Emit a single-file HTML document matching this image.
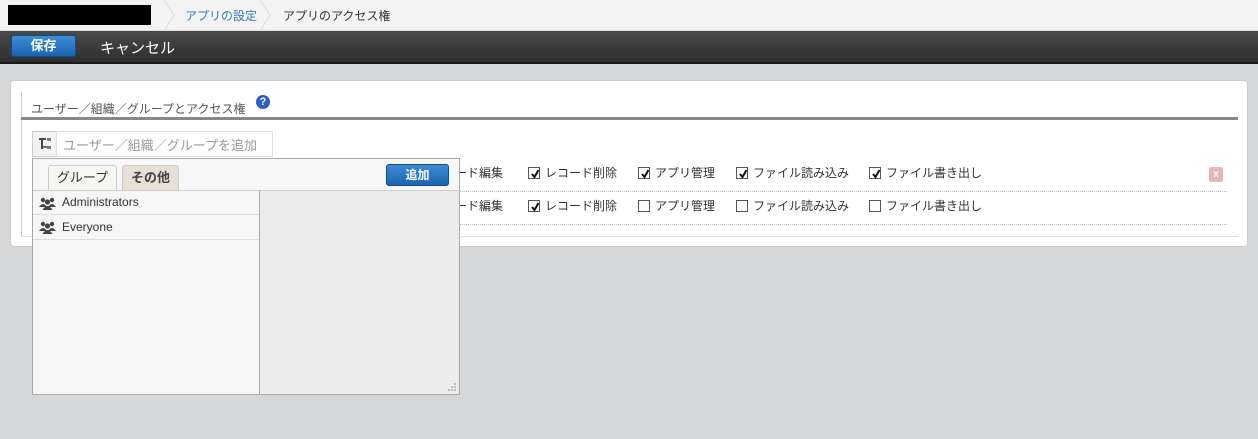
<!DOCTYPE html>
<html><head><meta charset="utf-8"><style>
*{box-sizing:border-box;margin:0;padding:0}
body{width:1258px;height:439px;overflow:hidden;background:#d5d7d9;font-family:"Liberation Sans","Noto Sans CJK JP",sans-serif;position:relative;color:#333}
.a{position:absolute}
.cb{position:absolute;width:12px;height:12px;border:1px solid #555;background:#fff}
.cb svg{position:absolute;left:1px;top:1px}
.t{position:absolute;font-size:12px;color:#333;white-space:nowrap}
</style></head><body>
<div class="a" style="left:0;top:0;width:1258px;height:31px;background:#f3f3f3;border-bottom:1px solid #ddd"></div>
<div class="a" style="left:8px;top:5px;width:143px;height:20px;background:#000"></div>
<svg class="a" style="left:160px;top:0" width="120" height="31"><path d="M4 0 L14 15 L4 31" fill="none" stroke="#ddd"/><path d="M100 0 L110 15 L100 31" fill="none" stroke="#ddd"/></svg>
<div class="t" style="left:185px;top:7px;font-size:12px;color:#3b79b8">アプリの設定</div>
<div class="t" style="left:283px;top:7px;font-size:12px">アプリのアクセス権</div>
<div class="a" style="left:0;top:31px;width:1258px;height:33px;background:linear-gradient(#4a4a4a,#2e2e2e);border-bottom:2px solid #1a1a1a"></div>
<div class="a" style="left:11px;top:35px;width:65px;height:22px;background:linear-gradient(#3d8ed8,#1b63b0);border:1px solid #0f4c8a;border-radius:3px;color:#fff;font-weight:bold;font-size:13px;text-align:center;line-height:20px">保存</div>
<div class="t" style="left:100px;top:37px;color:#fff;font-size:15px">キャンセル</div>
<div class="a" style="left:10px;top:80px;width:1238px;height:167px;background:#fff;border:1px solid #ccc;border-radius:4px"></div>
<div class="a" style="left:21px;top:92px;width:1px;height:144px;background:#ccc"></div>
<div class="a" style="left:21px;top:236px;width:1217px;height:1px;background:#e6dcd4"></div>
<div class="t" style="left:31px;top:100px;font-size:12px;color:#555">ユーザー／組織／グループとアクセス権</div>
<div class="a" style="left:256px;top:95px;width:14px;height:14px;border-radius:50%;background:#2c5fc2;color:#fff;font-size:11px;font-weight:bold;text-align:center;line-height:14px">?</div>
<div class="a" style="left:21px;top:117px;width:1217px;height:3px;background:#888"></div>
<div class="a" style="left:32px;top:131px;width:25px;height:26px;border:1px solid #ccc;background:#f2f2f2"></div>
<svg class="a" style="left:38px;top:137px" width="14" height="14"><path d="M1 2H8M4 2V12" stroke="#444" stroke-width="2" fill="none"/><rect x="9" y="1" width="4" height="3" fill="#777"/><rect x="9" y="9" width="4" height="3" fill="#777"/><path d="M4 10H9" stroke="#444" stroke-width="1.5"/></svg>
<div class="a" style="left:56px;top:131px;width:217px;height:26px;border:1px solid #ddd;background:#fff"></div>
<div class="t" style="left:63px;top:135px;font-size:13px;color:#999">ユーザー／組織／グループを追加</div>
<div class="t" style="left:455px;top:164px">ード編集</div>
<div class="cb" style="left:528px;top:167px"><svg width="10" height="10"><path d="M2 5L4.5 8L8.5 1" stroke="#111" stroke-width="2" fill="none"/></svg></div><div class="t" style="left:545px;top:164px">レコード削除</div>
<div class="cb" style="left:638px;top:167px"><svg width="10" height="10"><path d="M2 5L4.5 8L8.5 1" stroke="#111" stroke-width="2" fill="none"/></svg></div><div class="t" style="left:655px;top:164px">アプリ管理</div>
<div class="cb" style="left:736px;top:167px"><svg width="10" height="10"><path d="M2 5L4.5 8L8.5 1" stroke="#111" stroke-width="2" fill="none"/></svg></div><div class="t" style="left:753px;top:164px">ファイル読み込み</div>
<div class="cb" style="left:869px;top:167px"><svg width="10" height="10"><path d="M2 5L4.5 8L8.5 1" stroke="#111" stroke-width="2" fill="none"/></svg></div><div class="t" style="left:886px;top:164px">ファイル書き出し</div>
<div class="a" style="left:1209px;top:167px;width:14px;height:15px;background:#e8b4b8;border-radius:2px;color:#fff;font-size:10px;font-weight:bold;text-align:center;line-height:15px">x</div>
<div class="a" style="left:455px;top:191px;width:772px;border-top:1px dotted #bbb"></div>
<div class="t" style="left:455px;top:197px">ード編集</div>
<div class="cb" style="left:528px;top:200px"><svg width="10" height="10"><path d="M2 5L4.5 8L8.5 1" stroke="#111" stroke-width="2" fill="none"/></svg></div><div class="t" style="left:545px;top:197px">レコード削除</div>
<div class="cb" style="left:638px;top:200px"></div><div class="t" style="left:655px;top:197px">アプリ管理</div>
<div class="cb" style="left:736px;top:200px"></div><div class="t" style="left:753px;top:197px">ファイル読み込み</div>
<div class="cb" style="left:869px;top:200px"></div><div class="t" style="left:886px;top:197px">ファイル書き出し</div>
<div class="a" style="left:455px;top:224px;width:772px;border-top:1px dotted #bbb"></div>
<div class="a" style="left:32px;top:158px;width:428px;height:237px;background:#f7f7f7;border:1px solid #aaa"></div>
<div class="a" style="left:48px;top:165px;width:69px;height:26px;background:#f7f7f2;border:1px solid #ccc;border-bottom:none;border-radius:3px 3px 0 0;font-size:13px;text-align:center;line-height:24px">グループ</div>
<div class="a" style="left:122px;top:165px;width:57px;height:25px;background:#e8e0d6;border:1px solid #ccc;border-bottom:none;border-radius:3px 3px 0 0;font-size:13px;text-align:center;line-height:24px;font-weight:bold;color:#444">その他</div>
<div class="a" style="left:386px;top:164px;width:63px;height:22px;background:linear-gradient(#3a8cd6,#1c64b0);border:1px solid #0f4c8a;border-radius:3px;color:#fff;font-size:12px;text-align:center;line-height:20px;font-weight:bold">追加</div>
<div class="a" style="left:33px;top:190px;width:426px;height:1px;background:#ccc"></div>
<div class="a" style="left:33px;top:191px;width:226px;height:203px;background:#f6f6f6"></div>
<div class="a" style="left:259px;top:191px;width:1px;height:203px;background:#aaa"></div>
<div class="a" style="left:260px;top:191px;width:199px;height:203px;background:#ececec"></div>
<div class="a" style="left:33px;top:214px;width:226px;height:1px;background:#ddd"></div>
<div class="a" style="left:33px;top:239px;width:226px;height:1px;background:#ddd"></div>
<svg class="a" style="left:39px;top:196px" width="17" height="14"><g fill="#444"><circle cx="4" cy="4" r="2.2"/><circle cx="13" cy="4" r="2.2"/><path d="M0 11Q4 5 8 11Z"/><path d="M9 11Q13 5 17 11Z"/><circle cx="8.5" cy="6" r="2.6"/><path d="M3.5 14Q8.5 6 13.5 14Z"/></g></svg>
<div class="t" style="left:62px;top:195px;font-size:12px">Administrators</div>
<svg class="a" style="left:39px;top:220px" width="17" height="14"><g fill="#444"><circle cx="4" cy="4" r="2.2"/><circle cx="13" cy="4" r="2.2"/><path d="M0 11Q4 5 8 11Z"/><path d="M9 11Q13 5 17 11Z"/><circle cx="8.5" cy="6" r="2.6"/><path d="M3.5 14Q8.5 6 13.5 14Z"/></g></svg>
<div class="t" style="left:62px;top:220px;font-size:12px">Everyone</div>
<svg class="a" style="left:447px;top:382px" width="10" height="10"><g fill="#bbb"><rect x="7" y="1" width="2" height="2"/><rect x="4" y="4" width="2" height="2"/><rect x="7" y="4" width="2" height="2"/><rect x="1" y="7" width="2" height="2"/><rect x="4" y="7" width="2" height="2"/><rect x="7" y="7" width="2" height="2"/></g></svg>
</body></html>
